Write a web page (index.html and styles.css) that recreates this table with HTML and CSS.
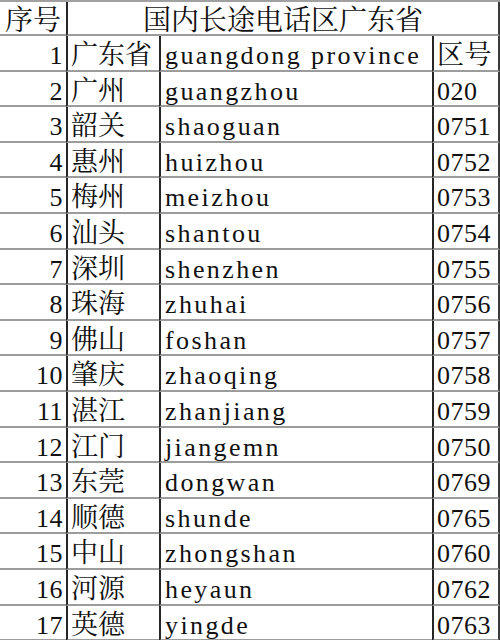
FILE: index.html
```html
<!DOCTYPE html>
<html>
<head>
<meta charset="utf-8">
<title>国内长途电话区广东省</title>
<link rel="stylesheet" href="styles.css">
</head>
<body>
<div class="sheet">
  <div class="c zh head head-no">序号</div>
  <div class="c zh head v title">国内长途电话区广东省</div>

  <div class="c lat num">1</div><div class="c zh v name">广东省</div><div class="c lat v py">guangdong province</div><div class="c zh v code last">区号</div>
  <div class="c lat num">2</div><div class="c zh v name">广州</div><div class="c lat v py">guangzhou</div><div class="c lat v code last">020</div>
  <div class="c lat num">3</div><div class="c zh v name">韶关</div><div class="c lat v py">shaoguan</div><div class="c lat v code last">0751</div>
  <div class="c lat num">4</div><div class="c zh v name">惠州</div><div class="c lat v py">huizhou</div><div class="c lat v code last">0752</div>
  <div class="c lat num">5</div><div class="c zh v name">梅州</div><div class="c lat v py">meizhou</div><div class="c lat v code last">0753</div>
  <div class="c lat num">6</div><div class="c zh v name">汕头</div><div class="c lat v py">shantou</div><div class="c lat v code last">0754</div>
  <div class="c lat num">7</div><div class="c zh v name">深圳</div><div class="c lat v py">shenzhen</div><div class="c lat v code last">0755</div>
  <div class="c lat num">8</div><div class="c zh v name">珠海</div><div class="c lat v py">zhuhai</div><div class="c lat v code last">0756</div>
  <div class="c lat num">9</div><div class="c zh v name">佛山</div><div class="c lat v py">foshan</div><div class="c lat v code last">0757</div>
  <div class="c lat num">10</div><div class="c zh v name">肇庆</div><div class="c lat v py">zhaoqing</div><div class="c lat v code last">0758</div>
  <div class="c lat num">11</div><div class="c zh v name">湛江</div><div class="c lat v py">zhanjiang</div><div class="c lat v code last">0759</div>
  <div class="c lat num">12</div><div class="c zh v name">江门</div><div class="c lat v py">jiangemn</div><div class="c lat v code last">0750</div>
  <div class="c lat num">13</div><div class="c zh v name">东莞</div><div class="c lat v py">dongwan</div><div class="c lat v code last">0769</div>
  <div class="c lat num">14</div><div class="c zh v name">顺德</div><div class="c lat v py">shunde</div><div class="c lat v code last">0765</div>
  <div class="c lat num">15</div><div class="c zh v name">中山</div><div class="c lat v py">zhongshan</div><div class="c lat v code last">0760</div>
  <div class="c lat num">16</div><div class="c zh v name">河源</div><div class="c lat v py">heyaun</div><div class="c lat v code last">0762</div>
  <div class="c lat num">17</div><div class="c zh v name">英德</div><div class="c lat v py">yingde</div><div class="c lat v code last">0763</div>
</div>
</body>
</html>
```
FILE: styles.css
```css
html, body {
  margin: 0;
  padding: 0;
  background: #ffffff;
}

body {
  width: 500px;
  height: 640px;
  overflow: hidden;
  color: #111111;
  font-family: "Liberation Serif", serif;
  font-size: 26px;
}

.sheet {
  display: grid;
  grid-template-columns: 66px 93px 273px 68px;
  grid-template-rows: 34px;
  grid-auto-rows: 35.6px;
  border-top: 2px solid #a0a0a0;
}

.c {
  box-sizing: border-box;
  border-bottom: 2px solid #9c9c9c;
  white-space: nowrap;
}

.lat {
  font-family: "Liberation Serif", serif;
  font-size: 26px;
  line-height: 26px;
  padding-top: 7px;
}

.zh {
  font-family: "Noto Serif CJK SC", "Noto Sans CJK SC", serif;
  font-size: 27px;
  line-height: 30px;
  padding-top: 2px;
}

.head {
  font-size: 28px;
  line-height: 30px;
  padding-top: 1px;
}

.v {
  border-left: 2px solid #262626;
}

.last {
  border-right: 2px solid #3a3a3a;
}

.head-no {
  padding-left: 5px;
}

.title {
  grid-column: 2 / 5;
  text-align: center;
  border-right: 2px solid #3a3a3a;
}

.num {
  text-align: right;
  padding-right: 3px;
  letter-spacing: 0.5px;
}

.name {
  padding-left: 3px;
}

.py {
  padding-left: 4px;
  letter-spacing: 2.4px;
}

.code {
  padding-left: 3px;
  letter-spacing: 0.5px;
}
```
